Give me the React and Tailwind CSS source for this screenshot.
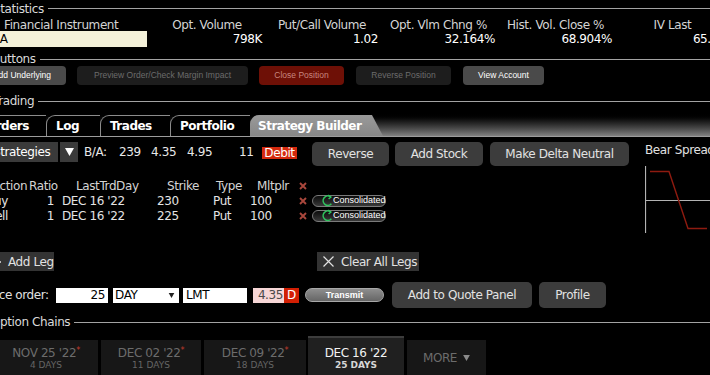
import React from "react";

const statCols = [
  { label: "Opt. Volume", value: "798K" },
  { label: "Put/Call Volume", value: "1.02" },
  { label: "Opt. Vlm Chng %", value: "32.164%" },
  { label: "Hist. Vol. Close %", value: "68.904%" },
  { label: "IV Last", value: "65.8%" },
];

const actionButtons = [
  { label: "Add Underlying", cls: "ml-[-22px] w-[88px] bg-[#4a4a4a] text-white" },
  { label: "Preview Order/Check Margin Impact", cls: "ml-[11px] w-[171px] bg-[#1d1d1d] text-[#6c6c6c]" },
  { label: "Close Position", cls: "ml-[11px] w-[85px] bg-[#6e1006] text-[#c8867f]" },
  { label: "Reverse Position", cls: "ml-[12px] w-[95px] bg-[#1d1d1d] text-[#6c6c6c]" },
  { label: "View Account", cls: "ml-[12px] w-[81px] bg-[#4a4a4a] text-white" },
];

const tabs = [
  { label: "Orders", cls: "ml-[-24px] w-[70px]" },
  { label: "Log", cls: "w-[54px]" },
  { label: "Trades", cls: "w-[70px]" },
  { label: "Portfolio", cls: "w-[80px]" },
];

const legs = [
  { action: "Buy", ratio: 1, day: "DEC 16 '22", strike: 230, type: "Put", mult: 100 },
  { action: "Sell", ratio: 1, day: "DEC 16 '22", strike: 225, type: "Put", mult: 100 },
];

const expiries = [
  { date: "NOV 25 '22", days: "4 DAYS", cls: "ml-[-6px] w-[104px]" },
  { date: "DEC 02 '22", days: "11 DAYS", cls: "ml-[3px] w-[100px]" },
  { date: "DEC 09 '22", days: "18 DAYS", cls: "ml-[3px] w-[102px]" },
];

const SectionHead = ({ label, shift, className }) => (
  <div className={`flex items-center ${className}`}>
    <span className={`whitespace-nowrap text-[#dadada] ${shift}`}>{label}</span>
    <div className="ml-[4px] h-px flex-1 bg-[#a3a3a3]" />
  </div>
);

const RedX = () => (
  <svg width="8" height="8" viewBox="0 0 8 8">
    <path d="M1 1l6 6M7 1L1 7" stroke="#a9473c" strokeWidth="1.9" />
  </svg>
);

const Caret = ({ color = "#fff", w = 9, h = 8 }) => (
  <svg width={w} height={h} viewBox="0 0 9 8">
    <path d="M0 0h9L4.5 8z" fill={color} />
  </svg>
);

const ConsolidatedPill = () => (
  <div className="flex h-[12px] w-[74px] items-center rounded-full border border-[#7a7a7a] bg-linear-to-b from-[#0c0c0c] to-[#3a3a3a] pl-[8px] font-['Liberation_Sans',sans-serif] text-[9px] tracking-normal text-white">
    <svg width="13" height="13" viewBox="0 0 13 13" className="shrink-0">
      <path d="M9.6 2.9A4.7 4.7 0 1 0 10.4 9.8" stroke="#2fc25d" strokeWidth="1.6" fill="none" />
      <path d="M7.2 1.2L9.9 3 7.6 5" stroke="#2fc25d" strokeWidth="1.4" fill="none" />
    </svg>
    <span className="ml-[-1px]">Consolidated</span>
  </div>
);

export default function App() {
  return (
    <div className="h-[375px] w-[710px] overflow-hidden bg-black font-['DejaVu_Sans',sans-serif] text-[12px] leading-none tracking-[-0.4px] text-[#e8e8e8]">
      {/* Statistics */}
      <SectionHead label="Statistics" shift="ml-[-7px]" className="h-[17px]" />
      <div className="grid h-[16px] grid-cols-[150px_114px_116px_117px_117px_117px] items-center text-[#d4d4d4]">
        <span className="whitespace-nowrap pl-[4px]">Financial Instrument</span>
        {statCols.map((c) => (
          <span key={c.label} className="whitespace-nowrap text-center">{c.label}</span>
        ))}
      </div>
      <div className="mt-[-2px] grid h-[16px] grid-cols-[150px_114px_116px_117px_117px_117px] items-center text-white">
        <div className="ml-[-24px] flex h-full w-[171px] items-center bg-[#f4f1d9] pl-[3px] text-black">TSLA</div>
        {statCols.map((c) => (
          <span key={c.label} className="whitespace-nowrap pr-[2px] text-right">{c.value}</span>
        ))}
      </div>

      {/* Buttons */}
      <SectionHead label="Buttons" shift="ml-[-8px]" className="mt-[5px] h-[14px]" />
      <div className="flex h-[19px] font-['Liberation_Sans',sans-serif] text-[8.5px] tracking-normal">
        {actionButtons.map((b) => (
          <div key={b.label} className={`flex h-full shrink-0 items-center justify-center whitespace-nowrap rounded-[4px] ${b.cls}`}>
            {b.label}
          </div>
        ))}
      </div>

      {/* Trading */}
      <SectionHead label="Trading" shift="ml-[-7px]" className="mt-[9px] h-[14px]" />
      <div className="flex h-[29px] items-end border-b border-[#9c9c9c] bg-linear-to-b from-black from-[18%] to-[#818181] font-bold tracking-[-0.5px]">
        {tabs.map((t) => (
          <div key={t.label} className={`flex h-[21px] shrink-0 items-center rounded-tl-[9px] border-l border-t border-[#8c8c8c] bg-black pl-[9px] text-white ${t.cls}`}>
            {t.label}
          </div>
        ))}
        <div className="flex h-[21px] w-[133px] shrink-0 items-center rounded-tl-[9px] bg-linear-to-b from-[#9a9a9a] to-[#878787] pl-[8px] text-white [clip-path:polygon(0_0,calc(100%-11px)_0,100%_100%,0_100%)]">
          Strategy Builder
        </div>
      </div>

      {/* Strategy builder body */}
      <div className="mt-[5px] flex">
        <div className="w-[645px] shrink-0">
          <div className="flex h-[24px] items-start">
            <div className="ml-[-10px] flex h-[20px] w-[68px] shrink-0 items-center bg-[#3a3a3a] pl-[3px] text-white">Strategies</div>
            <div className="ml-[2px] flex h-[20px] w-[18px] shrink-0 items-center justify-center bg-[#3a3a3a]">
              <Caret />
            </div>
            <span className="ml-[6px] flex h-[20px] w-[35px] shrink-0 items-center">B/A:</span>
            <span className="flex h-[20px] w-[32px] shrink-0 items-center">239</span>
            <span className="flex h-[20px] w-[36px] shrink-0 items-center">4.35</span>
            <span className="flex h-[20px] w-[52px] shrink-0 items-center">4.95</span>
            <span className="flex h-[20px] w-[23px] shrink-0 items-center">11</span>
            <span className="mt-[5px] flex h-[12px] w-[35px] shrink-0 items-center justify-center bg-[#d4290e] text-white">Debit</span>
            <div className="ml-[15px] flex h-[24px] w-[77px] shrink-0 items-center justify-center rounded-[5px] bg-[#3c3c3c] text-[#e2e2e2]">Reverse</div>
            <div className="ml-[6px] flex h-[24px] w-[88px] shrink-0 items-center justify-center rounded-[5px] bg-[#3c3c3c] text-[#e2e2e2]">Add Stock</div>
            <div className="ml-[7px] flex h-[24px] w-[139px] shrink-0 items-center justify-center whitespace-nowrap rounded-[5px] bg-[#3c3c3c] text-[#e2e2e2]">Make Delta Neutral</div>
          </div>

          {/* Legs */}
          <div className="mt-[12px] flex h-[15px] items-center whitespace-nowrap text-[#d4d4d4]">
            <span className="ml-[-8px] w-[37px] shrink-0">Action</span>
            <span className="w-[47px] shrink-0">Ratio</span>
            <span className="w-[91px] shrink-0">LastTrdDay</span>
            <span className="w-[49px] shrink-0">Strike</span>
            <span className="w-[41px] shrink-0">Type</span>
            <span className="w-[42px] shrink-0">Mltplr</span>
            <RedX />
          </div>
          {legs.map((l) => (
            <div key={l.action} className="flex h-[15px] items-center whitespace-nowrap text-[#e4e4e4]">
              <span className="ml-[-20px] w-[28px] shrink-0 text-right">{l.action}</span>
              <span className="w-[46px] shrink-0 text-right">{l.ratio}</span>
              <span className="ml-[8px] w-[95px] shrink-0">{l.day}</span>
              <span className="w-[56px] shrink-0">{l.strike}</span>
              <span className="w-[37px] shrink-0">{l.type}</span>
              <span className="w-[49px] shrink-0">{l.mult}</span>
              <span className="w-[13px] shrink-0">
                <RedX />
              </span>
              <ConsolidatedPill />
            </div>
          ))}

          <div className="mt-[29px] flex h-[19px]">
            <div className="ml-[-12px] flex h-full w-[66px] shrink-0 items-center gap-[7px] bg-[#333] pl-[5px] text-[#e2e2e2]">
              <svg width="8" height="8" viewBox="0 0 8 8">
                <path d="M4 0v8M0 4h8" stroke="#e2e2e2" strokeWidth="1.4" />
              </svg>
              <span>Add Leg</span>
            </div>
            <div className="ml-[263px] flex h-full w-[102px] shrink-0 items-center gap-[7px] bg-[#333] pl-[6px] whitespace-nowrap text-[#e2e2e2]">
              <svg width="11" height="11" viewBox="0 0 11 11">
                <path d="M0.5 0.5l10 10M10.5 0.5l-10 10" stroke="#e2e2e2" strokeWidth="1.2" />
              </svg>
              <span>Clear All Legs</span>
            </div>
          </div>

          {/* Place order */}
          <div className="mt-[11px] flex h-[26px] items-center whitespace-nowrap">
            <span className="ml-[-18px] w-[74px] shrink-0 text-[#e2e2e2]">Place order:</span>
            <div className="flex h-[15px] w-[52px] shrink-0 items-center justify-end bg-white pr-[3px] text-black">25</div>
            <div className="ml-[5px] flex h-[15px] w-[66px] shrink-0 items-center justify-between bg-white pl-[2px] pr-[4px] text-black">
              <span>DAY</span>
              <Caret color="#222" w={7} h={5} />
            </div>
            <div className="ml-[4px] flex h-[15px] w-[64px] shrink-0 items-center bg-white pl-[3px] text-black">LMT</div>
            <div className="ml-[6px] flex h-[15px] w-[31px] shrink-0 items-center justify-end bg-[#f6d6d6] pr-[1px] text-[#4a4a4a]">4.35</div>
            <div className="flex h-[15px] w-[15px] shrink-0 items-center justify-center bg-[#d21f03] text-white">D</div>
            <div className="ml-[6px] flex h-[14px] w-[79px] shrink-0 items-center justify-center rounded-full border border-[#a8a8a8] bg-linear-to-b from-[#8e8e8e] to-[#666] font-['Liberation_Sans',sans-serif] text-[9px] font-bold tracking-normal text-white">
              Transmit
            </div>
            <div className="ml-[8px] flex h-[26px] w-[140px] shrink-0 items-center justify-center rounded-[5px] bg-[#3c3c3c] text-[#e2e2e2]">Add to Quote Panel</div>
            <div className="ml-[7px] flex h-[26px] w-[67px] shrink-0 items-center justify-center rounded-[5px] bg-[#3c3c3c] text-[#e2e2e2]">Profile</div>
          </div>
        </div>

        {/* Strategy chart */}
        <div className="flex flex-col">
          <span className="mt-[2px] whitespace-nowrap text-[#e2e2e2]">Bear Spread</span>
          <svg width="65" height="68" viewBox="0 0 65 68" className="mt-[10px]">
            <path d="M0.5 0v67M0 34.5h65" stroke="#b3b3b3" strokeWidth="1.2" fill="none" />
            <path d="M5 5.5h19L43 62.5h19" stroke="#8e1b10" strokeWidth="1.4" fill="none" />
          </svg>
        </div>
      </div>

      {/* Option chains */}
      <SectionHead label="Option Chains" shift="ml-[-9px]" className="mt-[7px] h-[14px]" />
      <div className="mt-[7px] flex h-[39px] items-end">
        {expiries.map((e) => (
          <div key={e.date} className={`flex h-[35px] shrink-0 flex-col items-center bg-[#171717] pt-[7px] ${e.cls}`}>
            <span className="whitespace-nowrap text-[#6c6c6c]">
              {e.date}
              <span className="align-top text-[8px] text-[#c23a2c]">*</span>
            </span>
            <span className="mt-[2px] whitespace-nowrap text-[9px] tracking-normal text-[#656565]">{e.days}</span>
          </div>
        ))}
        <div className="ml-[2px] flex h-[39px] w-[96px] shrink-0 flex-col items-center border-t-[2px] border-[#3d3d3d] bg-[#202020] pt-[9px]">
          <span className="whitespace-nowrap text-[#f2f2f2]">DEC 16 '22</span>
          <span className="mt-[2px] whitespace-nowrap text-[9px] font-bold tracking-normal text-[#d6d6d6]">25 DAYS</span>
        </div>
        <div className="ml-[3px] flex h-[35px] w-[79px] shrink-0 items-center justify-center gap-[6px] bg-[#171717] text-[#6c6c6c]">
          <span>MORE</span>
          <Caret color="#8a8a8a" w={7} h={6} />
        </div>
      </div>
    </div>
  );
}
